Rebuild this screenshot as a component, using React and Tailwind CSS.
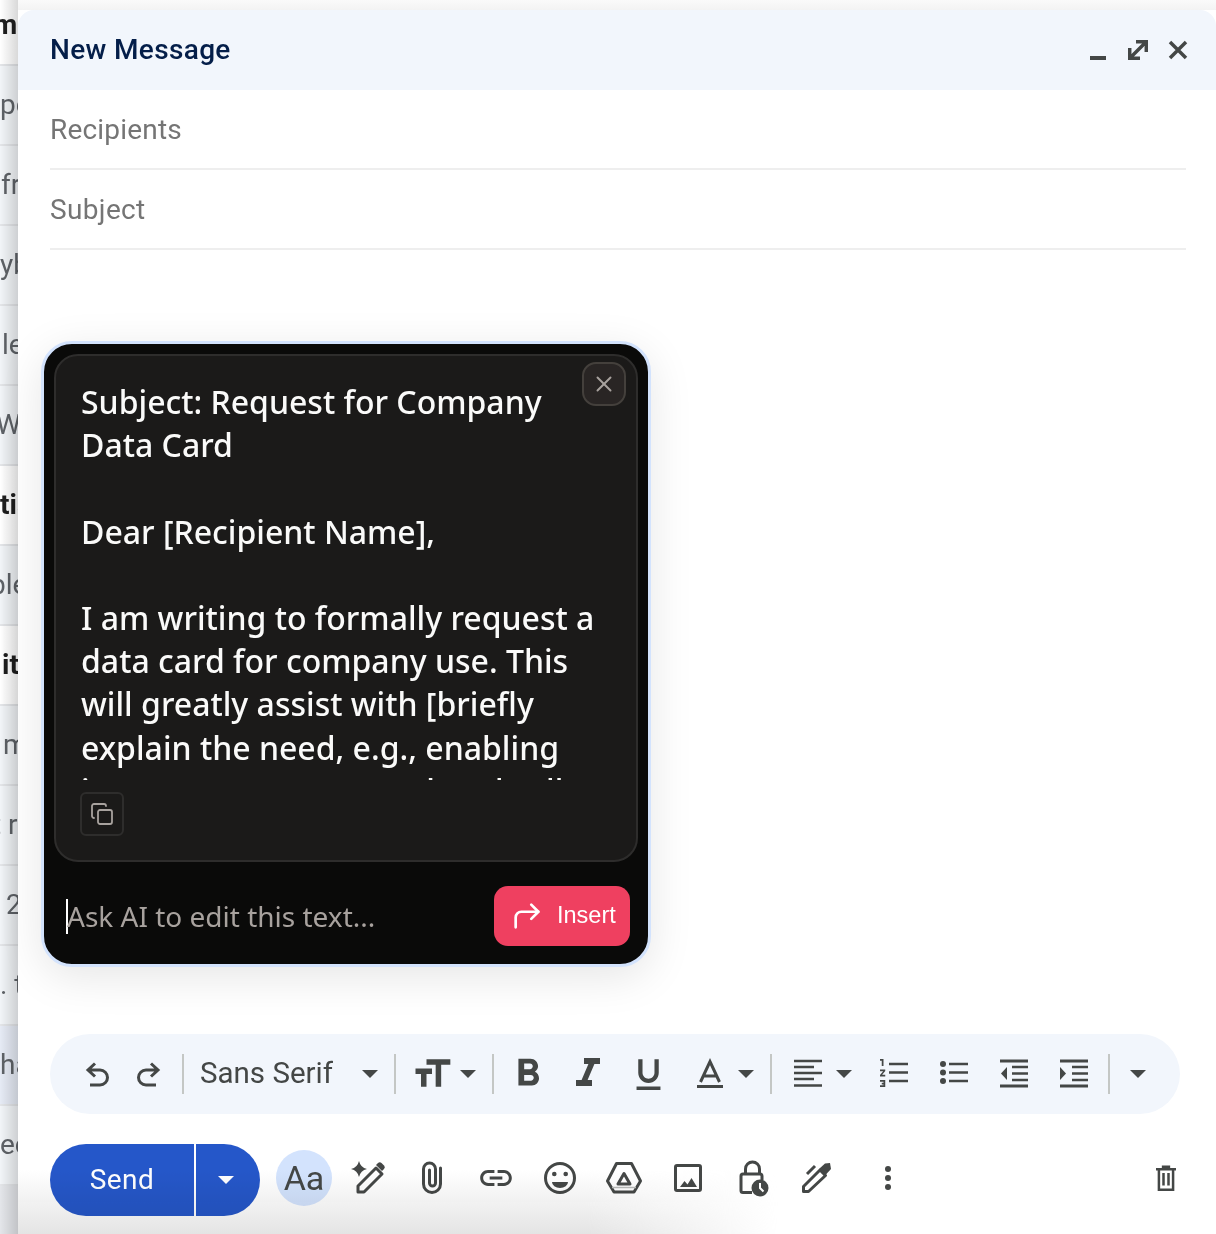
import React from 'react';
import { X, Copy, CornerUpRight } from 'lucide-react';
import {
  MdFormatSize,
  MdFormatBold,
  MdFormatItalic,
  MdFormatUnderlined,
  MdLink,
} from 'react-icons/md';

const dark = '#444746';

const inboxRows = [
  { text: 'm', bold: true, bg: 'bg-white', offset: '-ml-[7px]' },
  { text: 'pe', bg: 'bg-[#f2f5f8]', offset: 'ml-0' },
  { text: 'fr', bg: 'bg-[#f2f5f8]', offset: 'ml-px' },
  { text: 'yb', bg: 'bg-[#f2f5f8]', offset: 'ml-0' },
  { text: 'le', bg: 'bg-[#f2f5f8]', offset: 'ml-0.5' },
  { text: 'We', bg: 'bg-[#f2f5f8]', offset: '-ml-1' },
  { text: 'tia', bold: true, bg: 'bg-white', offset: 'ml-0' },
  { text: 'ple', bg: 'bg-[#f2f5f8]', offset: '-ml-2.5' },
  { text: 'it', bold: true, bg: 'bg-white', offset: 'ml-0.5' },
  { text: 'm', bg: 'bg-[#f2f5f8]', offset: 'ml-[3px]' },
  { text: 't r', bg: 'bg-[#f2f5f8]', offset: '-ml-2' },
  { text: '2', bg: 'bg-[#f2f5f8]', offset: 'ml-[6px]' },
  { text: '. t', bg: 'bg-[#f2f5f8]', offset: 'ml-0' },
  { text: 'ha', bg: 'bg-[#e6ebf5]', offset: 'ml-0' },
  { text: 'ec', bg: 'bg-[#f2f5f8]', offset: 'ml-0' },
  { text: '', bg: 'bg-[#e4e6ea]', offset: 'ml-0' },
];

function Box({ children, size = 48 }) {
  return (
    <svg width={size} height={size} viewBox="0 0 48 48" fill="none" stroke={dark} strokeWidth="3">
      {children}
    </svg>
  );
}

function Caret({ color = dark }) {
  return (
    <svg width="16" height="8" viewBox="0 0 16 8">
      <path d="M0 0h16l-8 8z" fill={color} />
    </svg>
  );
}

function Sep() {
  return <div className="h-10 w-0.5 shrink-0 bg-[#c4c7c5]" />;
}

function Tool({ children, w = 'w-[60px]' }) {
  return <div className={`flex h-12 shrink-0 items-center justify-center ${w}`}>{children}</div>;
}

function InboxStrip() {
  return (
    <div className="relative -mt-[14px] w-[18px] shrink-0 overflow-hidden">
      {inboxRows.map((row, i) => (
        <div
          key={i}
          className={`flex h-20 items-center overflow-hidden whitespace-pre border-b-2 border-[#e3e5e8] font-['Roboto',sans-serif] text-[28px] ${row.bg} ${row.bold ? 'font-bold text-[#1f1f1f]' : 'text-[#5f6368]'}`}
        >
          <span className={row.offset}>{row.text}</span>
        </div>
      ))}
      <div className="pointer-events-none absolute inset-0 bg-linear-to-r from-transparent to-black/15" />
    </div>
  );
}

function Header() {
  return (
    <div className="flex h-20 items-center rounded-t-2xl bg-[#f2f6fc] pl-8 pr-7">
      <span className="text-[28px] font-medium tracking-[0.35px] text-[#041e49]">New Message</span>
      <div className="ml-auto flex items-center gap-5">
        <svg width="20" height="20" viewBox="0 0 20 20"><rect x="2" y="16" width="16" height="4" fill={dark} /></svg>
        <svg width="20" height="20" viewBox="0 0 20 20" fill="none" stroke={dark} strokeWidth="3.5">
          <path d="M8 1.7H18.3V12M1.7 8V18.3H12M3 17 17 3" />
        </svg>
        <svg width="20" height="20" viewBox="0 0 20 20" fill="none" stroke={dark} strokeWidth="3.5">
          <path d="M2 2 18 18M18 2 2 18" />
        </svg>
      </div>
    </div>
  );
}

function AiPopup() {
  return (
    <div className="ml-[23px] mt-[91px] w-[610px] rounded-[31px] border-[3px] border-[#d3e3fd] bg-[#0a0a09] p-2.5 pb-[18px] font-['Noto_Sans',sans-serif] shadow-[0_10px_44px_rgba(0,0,0,0.1)]">
      <div className="relative h-[508px] rounded-[24px] border-2 border-[#2e2d2c] bg-[#1b1a19] pl-[25px] pt-[24px]">
        <div className="h-[400px] overflow-hidden whitespace-nowrap text-[32px] font-medium leading-[43.2px] text-[#fafaf9]">
          <div>Subject: Request for Company</div>
          <div>Data Card</div>
          <div>&nbsp;</div>
          <div>Dear [Recipient Name],</div>
          <div>&nbsp;</div>
          <div>I am writing to formally request a</div>
          <div>data card for company use. This</div>
          <div>will greatly assist with [briefly</div>
          <div>explain the need, e.g., enabling</div>
          <div>important company-related calls].</div>
        </div>
        <div className="mt-3 flex h-11 w-11 -translate-x-px items-center justify-center rounded-md border-2 border-[#2e2d2c]">
          <Copy size={24} color="#a8a29e" strokeWidth={1.8} />
        </div>
        <div className="absolute right-[10px] top-[6px] flex h-11 w-11 items-center justify-center rounded-[14px] border-2 border-[#44403c] bg-[#292524]">
          <X size={26} color="#a8a29e" strokeWidth={1.8} />
        </div>
      </div>
      <div className="mt-6 flex items-center pl-3">
        <div className="h-[35px] w-0.5 bg-white" />
        <span className="-ml-[1px] text-[28px] text-[#a8a29e]">Ask AI to edit this text...</span>
        <div className="ml-auto mr-2 flex h-[60px] w-[136px] items-center gap-[13px] rounded-[14px] bg-[#ef4060] pl-[16px] text-white">
          <CornerUpRight size={34} strokeWidth={1.9} />
          <span className="font-['Liberation_Sans',sans-serif] text-[23.5px]">Insert</span>
        </div>
      </div>
    </div>
  );
}

function FormatBar() {
  return (
    <div className="ml-8 mt-[67px] flex h-20 w-[1130px] items-center rounded-full bg-[#f2f6fc] pl-[23px]">
      <Tool w="w-[50px]">
        <Box><path d="M14 20h12a7.5 7.5 0 0 1 0 15H16M21 13.5 14 20l7 6.5" /></Box>
      </Tool>
      <Tool w="w-[50px]">
        <Box><path d="M34 20H22a7.5 7.5 0 0 0 0 15h10M27 13.5l7 6.5-7 6.5" /></Box>
      </Tool>
      <div className="ml-[9px]"><Sep /></div>
      <div className="flex h-12 w-[210px] shrink-0 items-center pl-4 pr-4 text-[29.5px] text-[#444746]">
        <span className="-translate-y-px">Sans Serif</span>
        <div className="ml-auto"><Caret /></div>
      </div>
      <Sep />
      <div className="flex h-12 w-[96px] shrink-0 items-center pl-[14px]">
        <MdFormatSize size={44} color={dark} />
        <div className="ml-[6px]"><Caret /></div>
      </div>
      <Sep />
      <div className="w-1 shrink-0" />
      <Tool><MdFormatBold size={46} color={dark} /></Tool>
      <Tool><MdFormatItalic size={48} color={dark} /></Tool>
      <Tool><MdFormatUnderlined size={41} color={dark} /></Tool>
      <div className="flex h-12 w-[92px] shrink-0 items-center pl-2">
        <Box>
          <path d="M14.5 32 24 11.5 33.5 32M18 26H30" />
          <rect x="11" y="35" width="26" height="3" fill={dark} stroke="none" />
        </Box>
        <div className="ml-[4px]"><Caret /></div>
      </div>
      <Sep />
      <div className="flex h-12 w-[92px] shrink-0 items-center pl-3">
        <Box>
          <path strokeWidth="2.6" d="M10 11H38M10 17H30M10 23H38M10 29H30M10 35.5H38" />
        </Box>
        <div className="ml-[4px]"><Caret /></div>
      </div>
      <Tool>
        <Box>
          <g transform="translate(6.5 2) scale(1.75)" stroke="none" fill={dark}>
            <path d="M2 17h2v.5H3v1h1v.5H2v1h3v-4H2v1zm1-9h1V4H2v1h1v3zm-1 3h1.8L2 13.1v.9h3v-1H3.2L5 10.9V10H2v1z" />
          </g>
          <path strokeWidth="2.6" d="M19 14H38M19 22.5H38M19 31H38" />
        </Box>
      </Tool>
      <Tool>
        <Box>
          <circle cx="13" cy="14" r="3" fill={dark} stroke="none" />
          <circle cx="13" cy="22.5" r="3" fill={dark} stroke="none" />
          <circle cx="13" cy="31" r="3" fill={dark} stroke="none" />
          <path strokeWidth="2.6" d="M19 14H38M19 22.5H38M19 31H38" />
        </Box>
      </Tool>
      <Tool>
        <Box>
          <path d="M10 11H38M10 36H38" />
          <path strokeWidth="2.6" d="M22 17H38M22 23.5H38M22 30H38" />
          <path d="M11 23.5l6-6.5v13z" fill={dark} stroke="none" />
        </Box>
      </Tool>
      <Tool>
        <Box>
          <path d="M10 11H38M10 36H38" />
          <path strokeWidth="2.6" d="M22 17H38M22 23.5H38M22 30H38" />
          <path d="M16 23.5l-6-6.5v13z" fill={dark} stroke="none" />
        </Box>
      </Tool>
      <div className="ml-1"><Sep /></div>
      <div className="ml-[20px]"><Caret /></div>
    </div>
  );
}

function BottomBar() {
  return (
    <div className="ml-8 mr-[30px] mt-[30px] flex h-[72px] items-center">
      <div className="flex h-[72px] w-[144px] items-center justify-center rounded-l-full bg-[#2557c9] text-[28px] tracking-[0.5px] text-white">
        Send
      </div>
      <div className="ml-0.5 flex h-[72px] w-16 items-center justify-center rounded-r-full bg-[#2557c9] pr-1">
        <Caret color="#ffffff" />
      </div>
      <div className="mb-1 ml-4 flex h-14 w-14 items-center justify-center rounded-full bg-[#d3e3fd] text-[34px] text-[#444746]">
        Aa
      </div>
      <div className="mb-1 ml-1 flex items-center">
        <Tool w="w-16">
          <Box>
            <path d="M15 7Q16.5 13.5 23 15 16.5 16.5 15 23 13.5 16.5 7 15 13.5 13.5 15 7z" fill={dark} stroke="none" />
            <path d="M14 38v-6L32 14l6 6-18 18z" strokeLinejoin="round" />
            <path d="M32 11l2-2a2.5 2.5 0 0 1 3.5 0l2.5 2.5a2.5 2.5 0 0 1 0 3.5l-2 2z" fill={dark} stroke="none" />
          </Box>
        </Tool>
        <Tool w="w-16">
          <Box>
            <path strokeLinecap="round" d="M32.5 14V30a8.5 8.5 0 0 1-17 0V15a6 6 0 0 1 12 0V29a3 3 0 0 1-6 0V16" />
          </Box>
        </Tool>
        <Tool w="w-16"><MdLink size={38} color={dark} /></Tool>
        <Tool w="w-16">
          <Box>
            <circle cx="24" cy="24" r="14.5" />
            <circle cx="18.3" cy="20" r="2.3" fill={dark} stroke="none" />
            <circle cx="29.7" cy="20" r="2.3" fill={dark} stroke="none" />
            <path d="M16 28H32A8 6 0 0 1 16 28z" fill={dark} stroke="none" />
          </Box>
        </Tool>
        <Tool w="w-16">
          <Box>
            <path strokeLinejoin="round" d="M16.5 9.5H31.5L40.5 27 34 38H14L7.5 27z" />
            <path strokeLinejoin="round" d="M24 19.5 30 30H18z" />
            <path stroke="#b8bab9" strokeWidth="1.5" d="M12 33.5H36" />
          </Box>
        </Tool>
        <Tool w="w-16">
          <Box>
            <rect x="11.5" y="11.5" width="25" height="25" rx="1.5" />
            <path d="M16 33l4.5-6 3 3.5 4-6.5 5.5 9z" fill={dark} stroke="none" />
          </Box>
        </Tool>
        <Tool w="w-16">
          <Box>
            <path d="M17.5 20v-5a7 7 0 0 1 14 0v5" />
            <path d="M24 38.5H15a2 2 0 0 1-2-2V22a2 2 0 0 1 2-2H32a2 2 0 0 1 2 2v4" />
            <circle cx="32" cy="34" r="8.5" fill={dark} stroke="none" />
            <path stroke="#ffffff" strokeWidth="2" d="M32 29v5l3.5 3.5" />
          </Box>
        </Tool>
        <Tool w="w-16">
          <Box>
            <path strokeLinejoin="round" d="M11.5 37.5v-5L28 16l5.5 5.5L16.5 37.5z" />
            <path d="M15 20 23 12" />
            <path d="M27 15 33 9.5l5-.5 1 6-5.5 6z" fill={dark} stroke="none" />
          </Box>
        </Tool>
        <Tool w="w-16">
          <div className="ml-4 flex flex-col gap-[3px]">
            <div className="h-1.5 w-1.5 rounded-full bg-[#444746]" />
            <div className="h-1.5 w-1.5 rounded-full bg-[#444746]" />
            <div className="h-1.5 w-1.5 rounded-full bg-[#444746]" />
          </div>
        </Tool>
      </div>
      <div className="mb-1 ml-auto flex w-10 justify-center">
        <Box>
          <path d="M12 13.5H36M19 10.5H29" />
          <path d="M15.5 13.5V38H32.5V13.5" />
          <path d="M21 18V33M27 18V33" />
        </Box>
      </div>
    </div>
  );
}

export default function App() {
  return (
    <div className="relative flex h-[1234px] w-[1216px] overflow-hidden bg-white font-['Roboto',sans-serif]">
      <InboxStrip />
      <div className="flex flex-1 flex-col bg-linear-to-b from-[#fafafa] to-[#f3f3f3] bg-[length:100%_10px] bg-no-repeat pt-2.5">
        <div className="relative flex-1 rounded-t-2xl bg-white">
          <Header />
          <div className="ml-8 mr-[30px] flex h-20 items-center border-b-2 border-[#eeeeee] pt-0.5 text-[28px] tracking-[0.2px] text-[#757575]">
            Recipients
          </div>
          <div className="ml-8 mr-[30px] flex h-20 items-center border-b-2 border-[#eeeeee] pt-0.5 text-[28px] tracking-[0.35px] text-[#757575]">
            Subject
          </div>
          <AiPopup />
          <FormatBar />
          <BottomBar />
          {/* soft shadow from the window underneath */}
          <div className="pointer-events-none absolute bottom-0 left-0 h-[64px] w-[760px] bg-linear-to-t from-[#e4e4e4] to-transparent mix-blend-multiply [mask-image:linear-gradient(to_right,black_75%,transparent)]" />
        </div>
      </div>
    </div>
  );
}
